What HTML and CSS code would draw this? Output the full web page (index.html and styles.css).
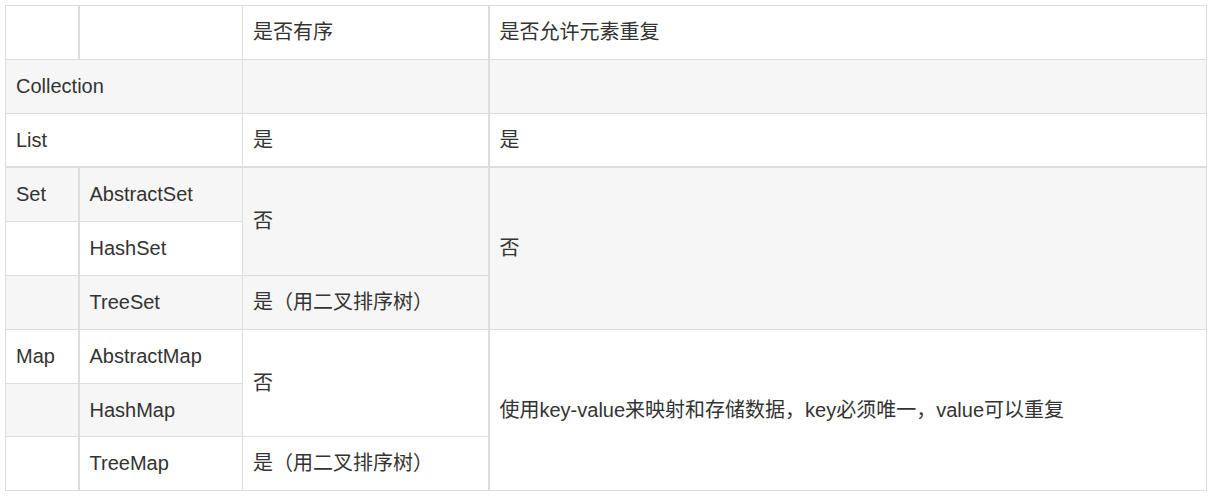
FILE: index.html
```html
<!DOCTYPE html>
<html lang="zh">
<head>
<meta charset="utf-8">
<link rel="stylesheet" href="styles.css">
</head>
<body>
<table class="grid">
  <colgroup>
    <col class="c1"><col class="c2"><col class="c3"><col class="c4">
  </colgroup>
  <tbody>
    <tr>
      <td class="col1"></td><td></td><td class="col3">是否有序</td><td>是否允许元素重复</td>
    </tr>
    <tr class="alt">
      <td colspan="2">Collection</td><td class="col3"></td><td></td>
    </tr>
    <tr class="sep">
      <td colspan="2">List</td><td class="col3">是</td><td>是</td>
    </tr>
    <tr class="alt">
      <td class="col1">Set</td><td>AbstractSet</td><td class="col3" rowspan="2">否</td><td rowspan="3">否</td>
    </tr>
    <tr>
      <td class="col1"></td><td>HashSet</td>
    </tr>
    <tr class="alt">
      <td class="col1"></td><td>TreeSet</td><td class="col3">是（用二叉排序树）</td>
    </tr>
    <tr>
      <td class="col1">Map</td><td>AbstractMap</td><td class="col3" rowspan="2">否</td><td rowspan="3">使用key-value来映射和存储数据，key必须唯一，value可以重复</td>
    </tr>
    <tr class="alt">
      <td class="col1"></td><td>HashMap</td>
    </tr>
    <tr>
      <td class="col1"></td><td>TreeMap</td><td class="col3">是（用二叉排序树）</td>
    </tr>
  </tbody>
</table>
</body>
</html>
```
FILE: styles.css
```css
html, body {
  margin: 0;
  padding: 0;
  background: #ffffff;
}
body {
  padding: 5px;
  font-family: "Liberation Sans", Arial, "Noto Sans CJK SC", sans-serif;
  color: #333333;
}
.grid {
  border-collapse: collapse;
  table-layout: fixed;
  width: 1202px;
  font-size: 20px;
}
.c1 { width: 73px; }
.c2 { width: 164px; }
.c3 { width: 246px; }
.c4 { width: auto; }
.grid td {
  border: 1px solid #dddddd;
  padding: 10px 10px;
  line-height: 32.8px;
  vertical-align: middle;
  text-align: left;
  white-space: nowrap;
  background: #ffffff;
}
.grid tr.alt td {
  background: #f6f6f6;
}
.grid td.col1 {
  border-right-width: 2px;
}
.grid td.col3 {
  border-right-width: 2px;
}
.grid tr.sep td {
  border-bottom-width: 2px;
}
```
